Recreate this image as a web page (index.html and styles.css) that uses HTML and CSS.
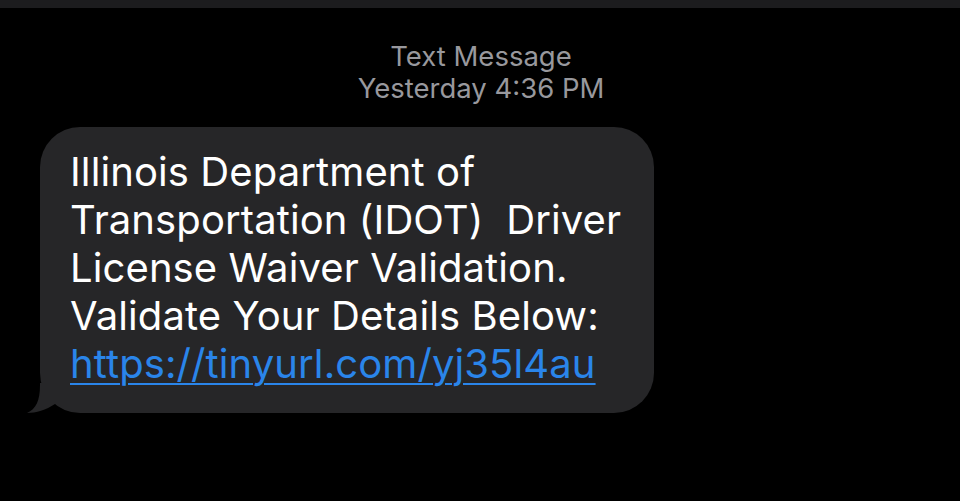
FILE: index.html
```html
<!DOCTYPE html>
<html>
<head>
<meta charset="utf-8">
<link rel="stylesheet" href="styles.css">
</head>
<body>
<div class="topbar"></div>
<div class="meta">
  <div class="meta-line">Text Message</div>
  <div class="meta-line">Yesterday 4:36 PM</div>
</div>
<div class="thread">
  <div class="bubble">
    <svg class="tail" width="30" height="30" viewBox="0 0 30 30"><path d="M13 0 L13 2 C13 18 9 26 0 30 C9 30 19 27 28 21 L28 0 Z" fill="#262628"/></svg>
    <p class="msg">Illinois Department of<br>Transportation (IDOT)&nbsp; Driver<br>License Waiver Validation.<br>Validate Your Details Below:<br><a class="link" href="#">https://tinyurl.com/yj35l4au</a></p>
  </div>
</div>
</body>
</html>
```
FILE: styles.css
```css
html, body {
  margin: 0;
  padding: 0;
  background: #000;
  width: 960px;
  height: 501px;
  overflow: hidden;
  font-family: Inter, "Noto Sans", sans-serif;
}
.topbar {
  height: 8px;
  background: #1c1c1e;
}
.meta {
  padding-top: 32px;
  text-align: center;
  color: #98989d;
  font-size: 27.5px;
  line-height: 32px;
  padding-left: 2px;
}
.thread {
  padding-top: 23px;
  padding-left: 40px;
}
.bubble {
  position: relative;
  width: 614px;
  height: 286px;
  box-sizing: border-box;
  background: #262628;
  border-radius: 40px;
  padding: 21px 0 0 30px;
}
.tail {
  position: absolute;
  left: -13px;
  bottom: 0;
}
.msg {
  margin: 0;
  color: #fff;
  font-size: 40px;
  line-height: 48px;
  letter-spacing: 0.1px;
}
.link {
  color: #2a85ea;
  text-decoration: underline;
  text-decoration-thickness: 2px;
  text-underline-offset: 5px;
}
```
